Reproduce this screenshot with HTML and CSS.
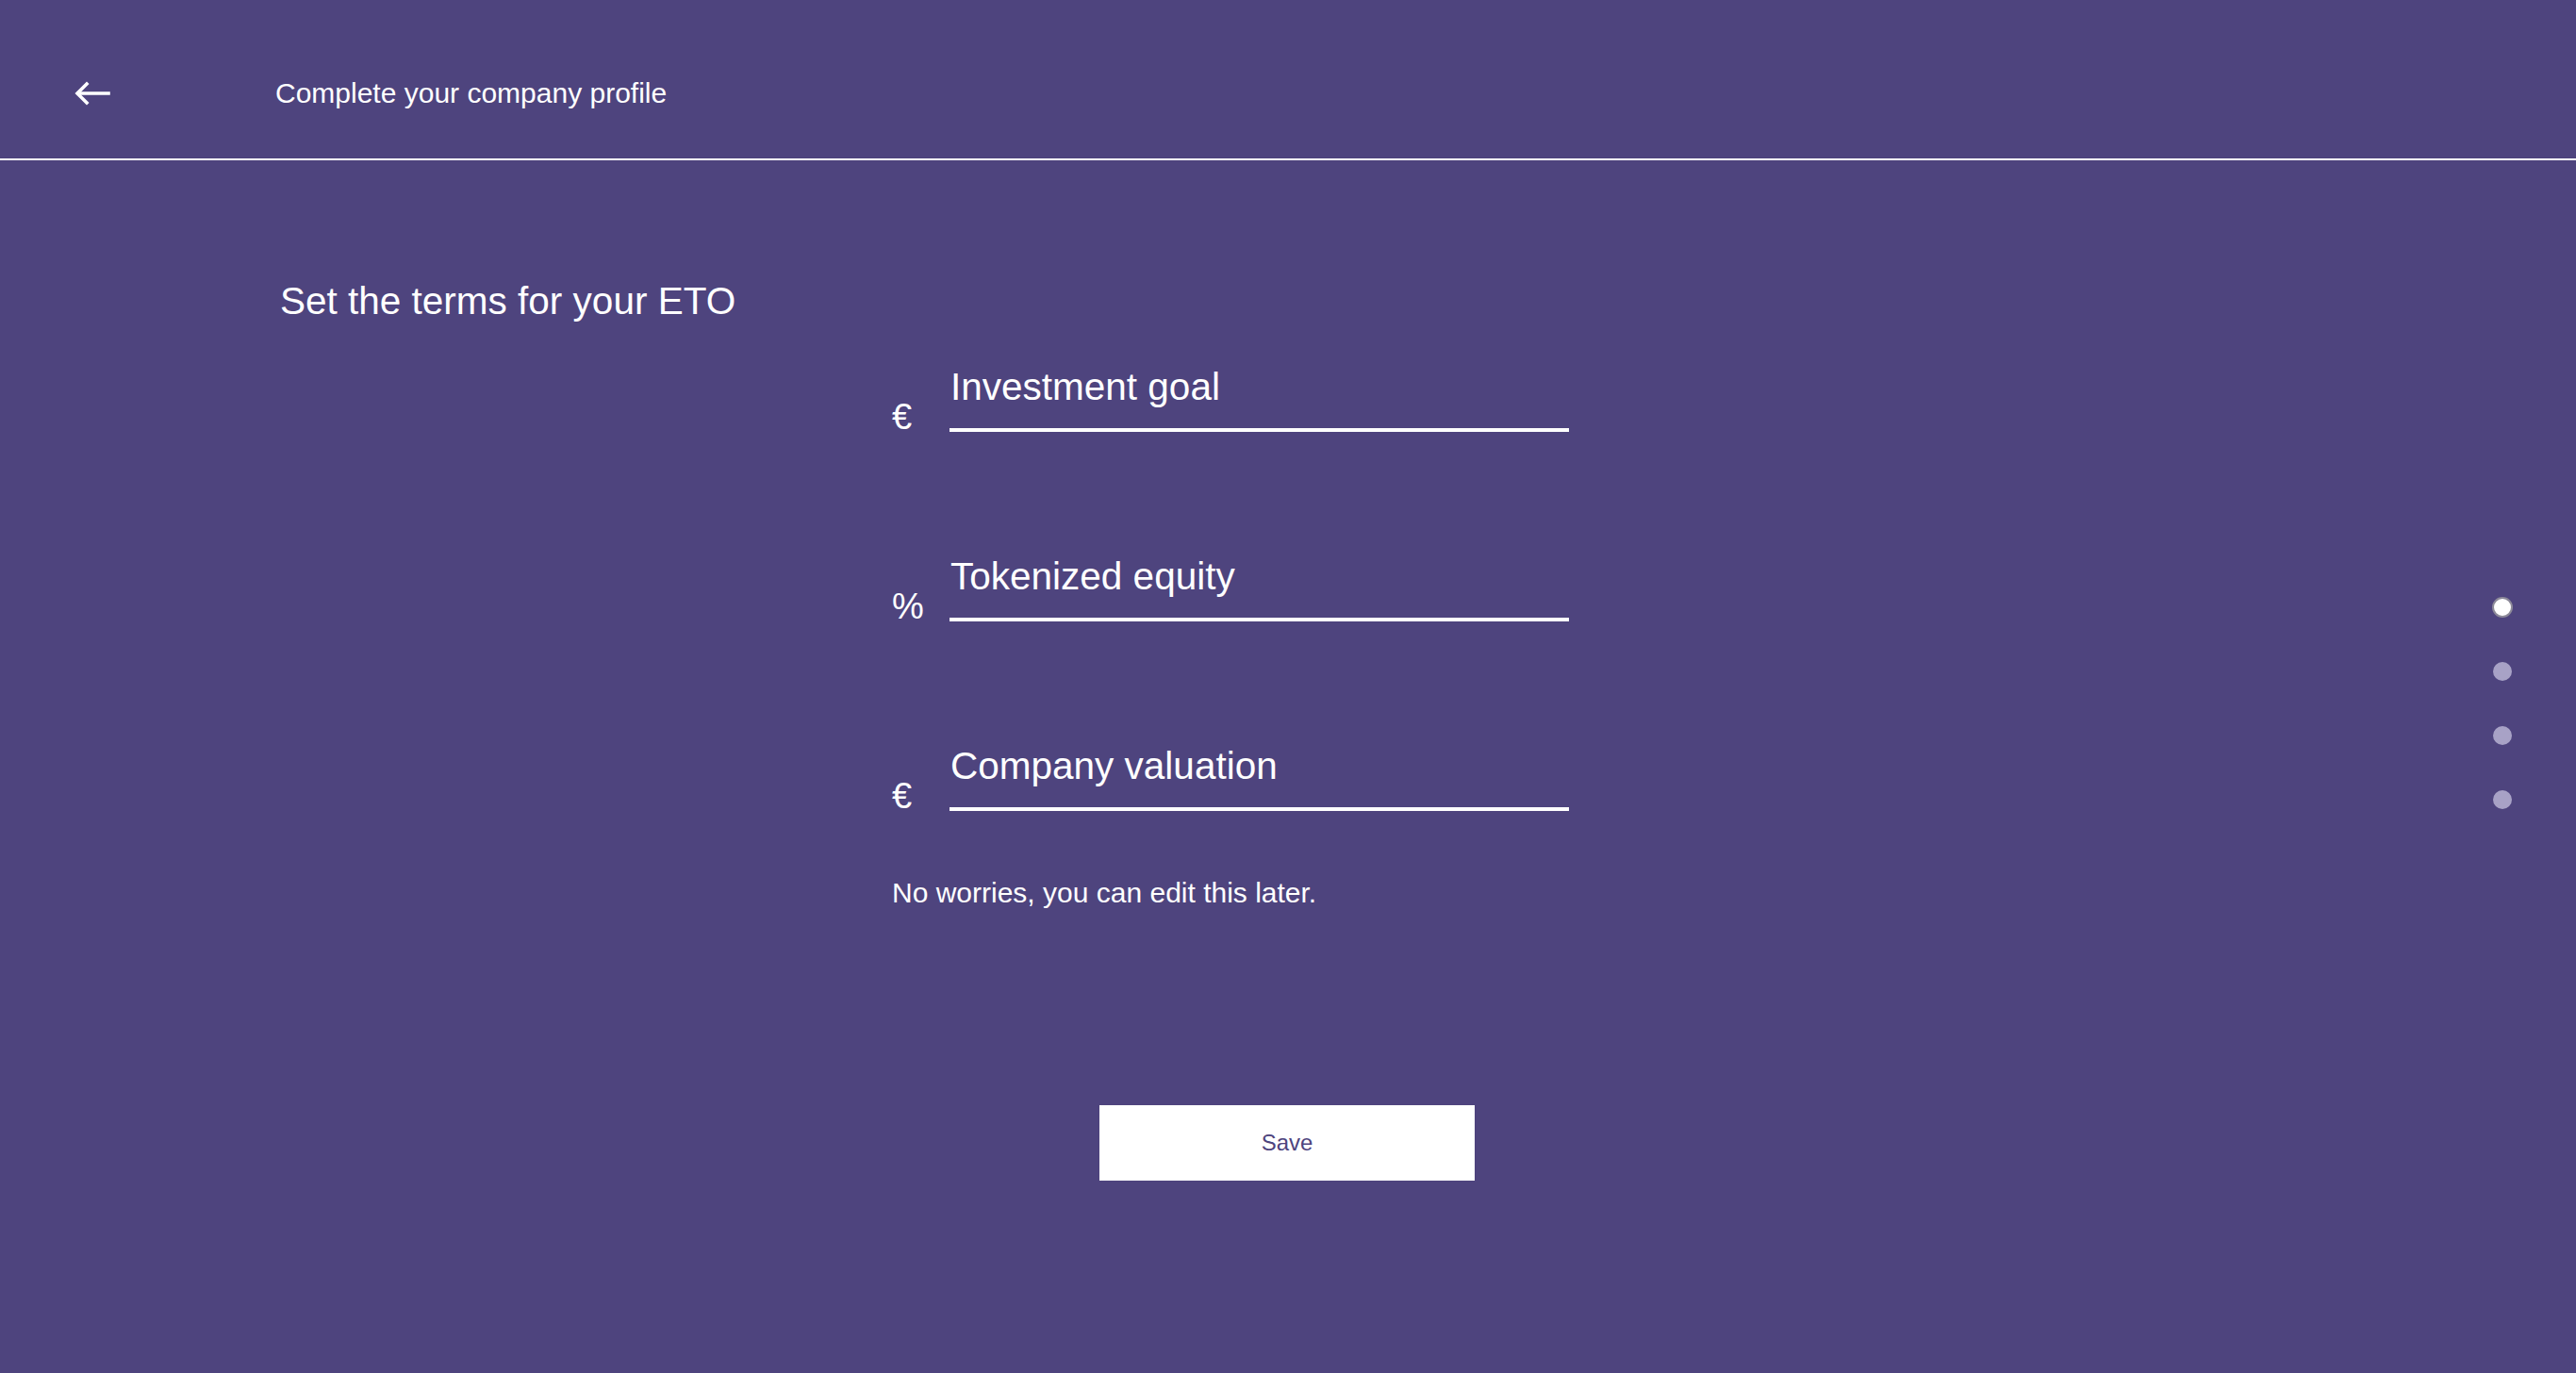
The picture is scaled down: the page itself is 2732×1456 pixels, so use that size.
FILE: index.html
```html
<!DOCTYPE html>
<html lang="en">
<head>
<meta charset="utf-8">
<title>Complete your company profile</title>
<link rel="stylesheet" href="styles.css">
</head>
<body>
<header class="topbar">
  <a class="back" href="#" aria-label="Back">
    <svg width="38" height="26" viewBox="0 0 38 26" fill="none" stroke="#fff" stroke-width="3.6" stroke-linecap="square">
      <path d="M36 13 H4"/>
      <path d="M13 3 L3 13 L13 23"/>
    </svg>
  </a>
  <h1 class="title">Complete your company profile</h1>
</header>
<main class="content">
  <h2 class="heading">Set the terms for your ETO</h2>
  <form class="form">
    <div class="field">
      <span class="prefix">€</span>
      <label class="input">Investment goal</label>
    </div>
    <div class="field">
      <span class="prefix">%</span>
      <label class="input">Tokenized equity</label>
    </div>
    <div class="field">
      <span class="prefix">€</span>
      <label class="input">Company valuation</label>
    </div>
    <p class="note">No worries, you can edit this later.</p>
  </form>
  <button class="save" type="button">Save</button>
</main>
<nav class="steps">
  <span class="dot active"></span>
  <span class="dot"></span>
  <span class="dot"></span>
  <span class="dot"></span>
</nav>
</body>
</html>
```
FILE: styles.css
```css
html, body {
  margin: 0;
  padding: 0;
}
body {
  background: #4e447e;
  color: #fff;
  font-family: "Liberation Sans", Arial, sans-serif;
  min-height: 1456px;
  position: relative;
}
.topbar {
  box-sizing: border-box;
  height: 170px;
  padding: 30px 0 0 79px;
  display: flex;
  align-items: center;
  border-bottom: 2px solid #fff;
}
.back {
  display: flex;
  width: 38px;
  height: 26px;
}
.title {
  margin: 0 0 0 175px;
  font-size: 30px;
  font-weight: 400;
  line-height: 1.15;
}
.content {
  padding: 126px 0 0 297px;
}
.heading {
  margin: 0;
  font-size: 40.5px;
  font-weight: 400;
  line-height: 46px;
}
.form {
  margin: 44px 0 0 649px;
  width: 718px;
  display: flex;
  flex-direction: column;
}
.field {
  display: flex;
  align-items: flex-end;
}
.field + .field {
  margin-top: 129px;
}
.prefix {
  width: 62px;
  font-size: 38px;
  line-height: 32px;
}
.input {
  flex: 0 0 656px;
  font-size: 40.5px;
  line-height: 48px;
  padding-bottom: 20px;
  border-bottom: 4px solid #fff;
  padding-left: 1px;
}
.note {
  margin: 70px 0 0;
  font-size: 30px;
  line-height: 1.15;
}
.save {
  display: block;
  margin: 207px 0 0 869px;
  width: 398px;
  height: 80px;
  border: 0;
  background: #fff;
  color: #4e447e;
  font-family: "Liberation Sans", Arial, sans-serif;
  font-size: 24px;
}
.steps {
  position: absolute;
  top: 634px;
  right: 68px;
  display: flex;
  flex-direction: column;
  gap: 48px;
}
.dot {
  box-sizing: border-box;
  width: 20px;
  height: 20px;
  border-radius: 50%;
  background: #a8a2c6;
}
.dot.active {
  width: 22px;
  height: 22px;
  margin: -1px;
  background: #fff;
  border: 2px solid #8d8a99;
}
```
